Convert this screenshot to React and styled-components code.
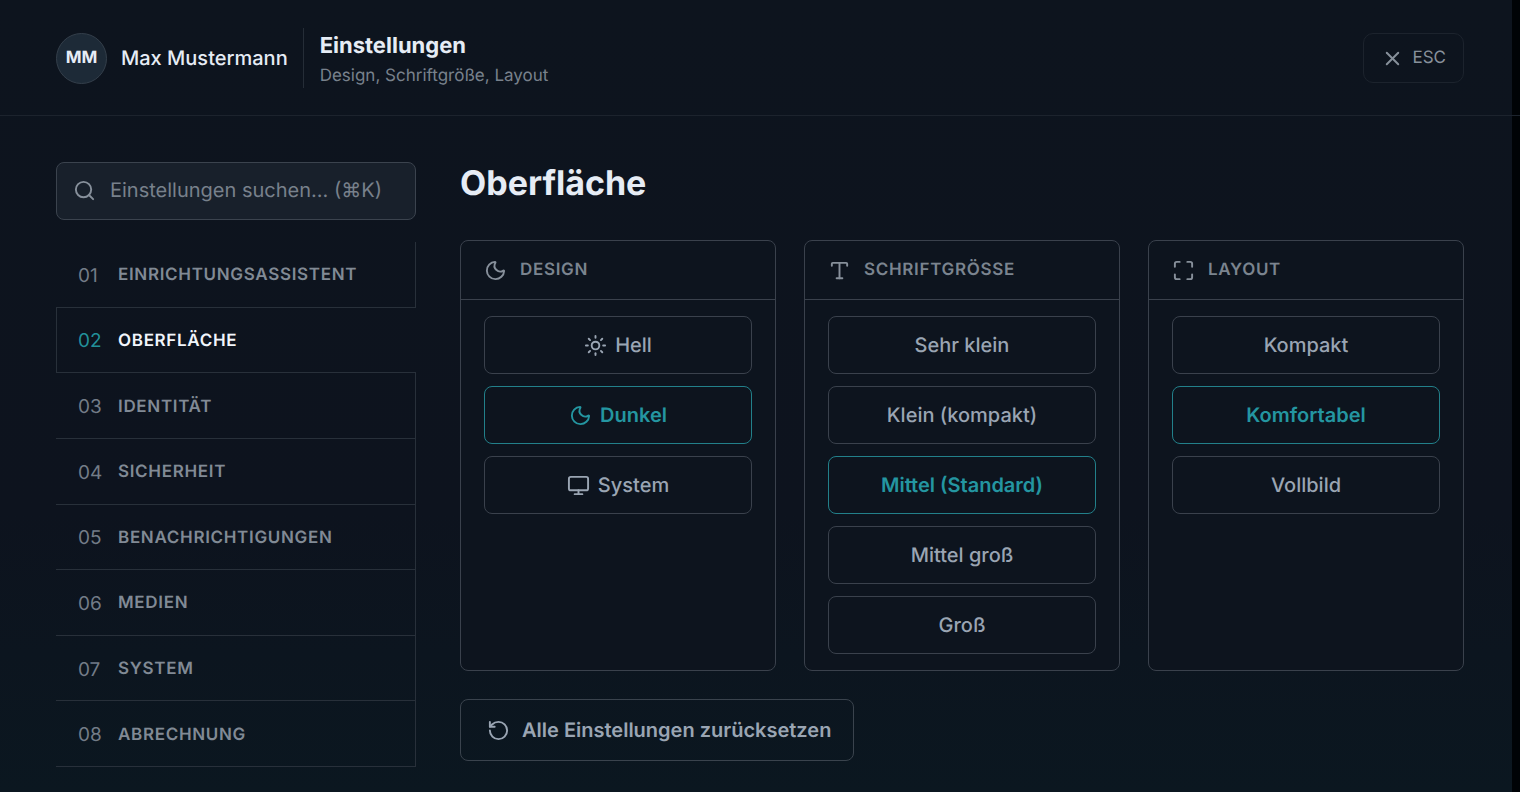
import styled, { createGlobalStyle, css } from "styled-components"
import { Maximize, Monitor, Moon, RotateCcw, Search, Sun, Type, X } from "lucide-react";

const GlobalStyle = createGlobalStyle`
  * {
    box-sizing: border-box;
  }

  body {
    margin: 0;
    background-color: #000306;
    font-family: Inter, "Liberation Sans", sans-serif;
    color: #e6ecf5;
    text-rendering: geometricPrecision;
  }

  button,
  input {
    font-family: inherit;
    text-rendering: inherit;
  }
`
const Page = styled.div`
  min-height: 100vh;
  background: linear-gradient(#0d141e, #0d131e 65%, #0b1720) no-repeat;
  background-size: calc(100% - 8px) 100%;
`
const Header = styled.header`
  display: flex;
  align-items: center;
  padding: 28px 56px 27px;
  border-bottom: 1px solid #1c232d;
`
const Avatar = styled.div`
  width: 51px;
  height: 51px;
  margin-right: 14px;
  display: flex;
  align-items: center;
  justify-content: center;
  border: 1px solid #343f4b;
  border-radius: 50%;
  background-color: #1d2a37;
  font-size: 17px;
  font-weight: 700;
`
const UserName = styled.span`
  font-size: 20px;
  font-weight: 500;
`
const HeaderText = styled.div`
  height: 60px;
  margin-left: 15px;
  padding: 4px 0 0 16px;
  display: flex;
  flex-direction: column;
  justify-content: center;
  gap: 4px;
  border-left: 1px solid #252d37;
`
const HeaderTitle = styled.div`
  font-size: 22px;
  line-height: 28px;
  font-weight: 700;
`
const HeaderSubtitle = styled.div`
  font-size: 17px;
  line-height: 24px;
  color: #78818c;
`
const CloseButton = styled.button`
  height: 50px;
  margin-left: auto;
  padding: 0 17px;
  display: flex;
  align-items: center;
  gap: 8px;
  border: 1px solid #1c232d;
  border-radius: 10px;
  background-color: transparent;
  color: #87909b;
  font-size: 17px;
  cursor: pointer;
`
const Content = styled.div`
  display: flex;
  align-items: flex-start;
  gap: 44px;
  padding: 46px 56px 24px;
`
const Sidebar = styled.aside`
  width: 360px;
  flex-shrink: 0;
`
const SearchBox = styled.label`
  height: 58px;
  margin-bottom: 22px;
  padding: 0 16px 2px;
  display: flex;
  align-items: center;
  gap: 14px;
  border: 1px solid #3b434e;
  border-radius: 8px;
  background-color: #18202b;
  color: #87909b;
`
const SearchInput = styled.input`
  flex: 1;
  min-width: 0;
  padding: 0;
  border: none;
  outline: none;
  background-color: transparent;
  color: #e6ecf5;
  font-size: 20px;

  &::placeholder {
    color: #78818c;
    opacity: 1;
  }
`
const Nav = styled.nav`
  min-height: 525px;
  display: grid;
  grid-auto-rows: 1fr;
`
const NavItem = styled.a`
  padding: 2px 21px 0 22px;
  display: flex;
  align-items: center;
  gap: 16px;
  border: solid #28303a;
  border-width: 0 1px 1px 0;
  color: #818a95;
  font-size: 17px;
  font-weight: 600;
  letter-spacing: 0.04em;
  text-decoration: none;
  text-transform: uppercase;

  ${props => props.$active && css`
    padding-left: 21px;
    border-width: 0 0 1px 1px;
    color: #f1f5fb;
  `}
`
const NavNumber = styled.span`
  width: 24px;
  color: ${props => props.$active ? "#22909a" : "#737c87"};
  font-size: 19px;
  font-weight: 400;
  letter-spacing: 0;
`
const Main = styled.main`
  flex: 1;
  min-width: 0;
`
const Title = styled.h1`
  margin: 0 0 34px;
  font-size: 34px;
  line-height: 44px;
  font-weight: 700;
`
const Cards = styled.div`
  display: grid;
  grid-template-columns: repeat(3, 1fr);
  gap: 28px;
  margin-bottom: 28px;
`
const Card = styled.section`
  border: 1px solid #3a414c;
  border-radius: 8px;
  background-color: #0d141e;
`
const CardHeader = styled.div`
  height: 59px;
  padding: 0 23px;
  display: flex;
  align-items: center;
  gap: 13px;
  border-bottom: 1px solid #3a414c;
  color: #87909b;
`
const CardTitle = styled.h2`
  margin: 0;
  color: #7b848f;
  font-size: 17px;
  font-weight: 600;
  letter-spacing: 0.04em;
  text-transform: uppercase;
`
const Options = styled.div`
  display: flex;
  flex-direction: column;
  gap: 12px;
  padding: 16px 23px;
`
const Option = styled.button`
  height: 58px;
  display: flex;
  align-items: center;
  justify-content: center;
  gap: 8px;
  border: 1px solid ${props => props.$active ? "#22808a" : "#3a414c"};
  border-radius: 8px;
  background-color: transparent;
  color: ${props => props.$active ? "#2496a1" : "#9aa5b3"};
  font-size: 20px;
  font-weight: ${props => props.$active ? 600 : 500};
  cursor: pointer;
`
const ResetButton = styled.button`
  height: 62px;
  padding: 0 22px 0 26px;
  display: flex;
  align-items: center;
  gap: 12px;
  border: 1px solid #3a434d;
  border-radius: 8px;
  background-color: transparent;
  color: #9aa5b3;
  font-size: 20px;
  font-weight: 600;
  cursor: pointer;
`

const iconProps = { size: 23, strokeWidth: 2, "aria-hidden": true }

const sections = [
    "Einrichtungsassistent",
    "Oberfläche",
    "Identität",
    "Sicherheit",
    "Benachrichtigungen",
    "Medien",
    "System",
    "Abrechnung",
]

const cards = [
    {
        title: "Design",
        icon: Moon,
        active: "Dunkel",
        options: [
            { label: "Hell", icon: Sun },
            { label: "Dunkel", icon: Moon },
            { label: "System", icon: Monitor },
        ],
    },
    {
        title: "Schriftgrösse",
        icon: Type,
        active: "Mittel (Standard)",
        options: [
            { label: "Sehr klein" },
            { label: "Klein (kompakt)" },
            { label: "Mittel (Standard)" },
            { label: "Mittel groß" },
            { label: "Groß" },
        ],
    },
    {
        title: "Layout",
        icon: Maximize,
        active: "Komfortabel",
        options: [
            { label: "Kompakt" },
            { label: "Komfortabel" },
            { label: "Vollbild" },
        ],
    },
]

const App = () => {
    return (
        <Page>
            <GlobalStyle/>
            <Header>
                <Avatar>MM</Avatar>
                <UserName>Max Mustermann</UserName>
                <HeaderText>
                    <HeaderTitle>Einstellungen</HeaderTitle>
                    <HeaderSubtitle>Design, Schriftgröße, Layout</HeaderSubtitle>
                </HeaderText>
                <CloseButton type="button">
                    <X {...iconProps}/>
                    ESC
                </CloseButton>
            </Header>
            <Content>
                <Sidebar>
                    <SearchBox>
                        <Search {...iconProps}/>
                        <SearchInput
                            type="text"
                            aria-label="Einstellungen suchen"
                            placeholder="Einstellungen suchen... (⌘K)"
                        />
                    </SearchBox>
                    <Nav>
                        {sections.map((name, i) => (
                            <NavItem key={name} href={"#" + name.toLowerCase()} $active={name === "Oberfläche"}>
                                <NavNumber $active={name === "Oberfläche"}>{"0" + (i + 1)}</NavNumber>
                                {name}
                            </NavItem>
                        ))}
                    </Nav>
                </Sidebar>
                <Main>
                    <Title>Oberfläche</Title>
                    <Cards>
                        {cards.map(({ title, icon: Icon, active, options }) => (
                            <Card key={title}>
                                <CardHeader>
                                    <Icon {...iconProps}/>
                                    <CardTitle>{title}</CardTitle>
                                </CardHeader>
                                <Options>
                                    {options.map(({ label, icon: OptionIcon }) => (
                                        <Option
                                            key={label}
                                            type="button"
                                            aria-pressed={label === active}
                                            $active={label === active}
                                        >
                                            {OptionIcon && <OptionIcon {...iconProps}/>}
                                            {label}
                                        </Option>
                                    ))}
                                </Options>
                            </Card>
                        ))}
                    </Cards>
                    <ResetButton type="button">
                        <RotateCcw {...iconProps}/>
                        Alle Einstellungen zurücksetzen
                    </ResetButton>
                </Main>
            </Content>
        </Page>
    )
}

export default App
